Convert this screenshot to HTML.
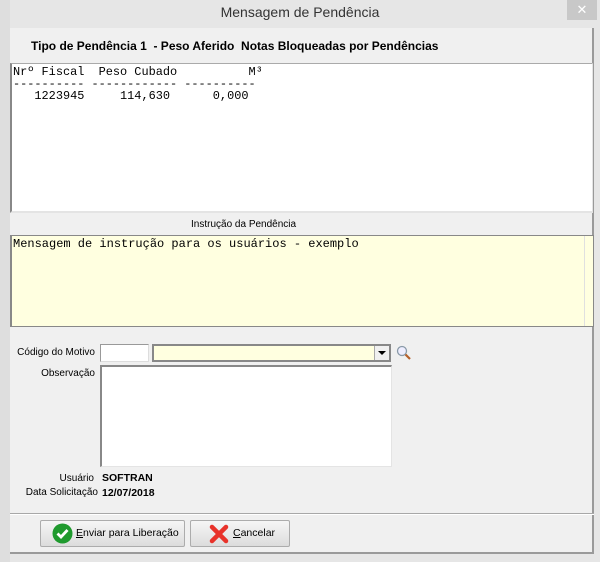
<!DOCTYPE html>
<html><head><meta charset="utf-8"><style>
*{margin:0;padding:0;box-sizing:border-box}
body{width:600px;height:562px;background:#e6e6e6;position:relative;overflow:hidden;font-family:"Liberation Sans",Arial,sans-serif;font-size:11px;color:#000}
.abs{position:absolute;white-space:nowrap}
.title{left:0;top:0;width:600px;height:26px;text-align:center;line-height:25px;font-size:14px;color:#333}
.close{left:567px;top:0;width:30px;height:20px;background:#c8c8c8;color:#fff;text-align:center;line-height:19px;font-size:13px}
.client{left:10px;top:28px;width:584px;height:526px;background:#f0f0f0;border-right:2px solid #9a9a9a;border-bottom:2px solid #9a9a9a}
.mono{font-family:"Liberation Mono","DejaVu Sans Mono",monospace;font-size:12px;white-space:pre;line-height:12px}
.btn{height:27px;border:1px solid #acacac;border-radius:2px;background:linear-gradient(#f6f6f6,#dcdcdc);font-size:11px}
.lbl{text-align:right;width:85px;font-size:10px}
</style></head><body>
<div class="abs" style="left:0;top:0;width:10px;height:562px;background:#dedede"></div>
<div class="abs title">Mensagem de Pendência</div>
<div class="abs close">✕</div>
<div class="abs client"></div>
<div class="abs" style="left:31px;top:39px;font-weight:bold;font-size:12px">Tipo de Pendência 1 &nbsp;- Peso Aferido &nbsp;Notas Bloqueadas por Pendências</div>
<div class="abs" style="left:10px;top:63px;width:583px;height:150px;background:#fff;border-left:2px solid #888;border-top:1px solid #aaa;border-bottom:2px solid #e4e4e4;border-right:1px solid #e4e4e4"></div>
<div class="abs mono" style="left:13px;top:66px;font-size:11.9px">Nrº Fiscal  Peso Cubado          M³
---------- ------------ ----------
   1223945     114,630      0,000</div>
<div class="abs" style="left:191px;top:219px;font-size:10px">Instrução da Pendência</div>
<div class="abs" style="left:10px;top:235px;width:584px;height:92px;background:#ffffe0;border:1px solid #888;border-left:2px solid #888"></div>
<div class="abs" style="left:584px;top:236px;width:1px;height:90px;background:#e0e0e0"></div>
<div class="abs mono" style="left:13px;top:238px">Mensagem de instrução para os usuários - exemplo</div>
<div class="abs lbl" style="left:10px;top:347px">Código do Motivo</div>
<div class="abs" style="left:100px;top:344px;width:49px;height:18px;background:#fff;border:1px solid #999;border-right-color:#ddd;border-bottom-color:#ddd"></div>
<div class="abs" style="left:152px;top:344px;width:239px;height:18px;background:#ffffe0;border:2px solid #888;border-right-color:#888"></div>
<div class="abs" style="left:374px;top:346px;width:15px;height:14px;background:#f0f0f0;border-left:1px solid #aaa"></div>
<div class="abs" style="left:378px;top:351px;width:0;height:0;border-left:4px solid transparent;border-right:4px solid transparent;border-top:4px solid #000"></div>
<svg class="abs" style="left:396px;top:345px" width="16" height="16"><circle cx="6" cy="6" r="4.5" fill="#eef" stroke="#8a9aa8" stroke-width="1.3"/><line x1="9.5" y1="9.5" x2="14" y2="14" stroke="#b5602a" stroke-width="2.2"/></svg>
<div class="abs lbl" style="left:10px;top:368px">Observação</div>
<div class="abs" style="left:100px;top:365px;width:292px;height:102px;background:#fff;border:1px solid #888;border-left:2px solid #888;border-top:2px solid #888;border-right-color:#e4e4e4;border-bottom-color:#e4e4e4"></div>
<div class="abs lbl" style="left:9px;top:473px">Usuário</div>
<div class="abs" style="left:102px;top:472px;font-weight:bold;font-size:10.5px">SOFTRAN</div>
<div class="abs lbl" style="left:13px;top:487px">Data Solicitação</div>
<div class="abs" style="left:102px;top:487px;font-weight:bold;font-size:10.5px">12/07/2018</div>
<div class="abs" style="left:10px;top:513px;width:584px;height:1px;background:#a8a8a8"></div>
<div class="abs" style="left:10px;top:514px;width:584px;height:1px;background:#fff"></div>
<div class="abs btn" style="left:40px;top:520px;width:145px"></div>
<svg class="abs" style="left:52px;top:523px" width="21" height="21"><circle cx="10.5" cy="10.5" r="10" fill="#1f9a2e"/><path d="M5.5 10.5 L9 14 L15.5 7" fill="none" stroke="#fff" stroke-width="2.8"/></svg>
<div class="abs" style="left:76px;top:527px;font-size:10.5px"><u>E</u>nviar para Liberação</div>
<div class="abs btn" style="left:190px;top:520px;width:100px"></div>
<svg class="abs" style="left:209px;top:524px" width="20" height="20"><path d="M3 3 L17 17 M17 3 L3 17" stroke="#e8322a" stroke-width="4.5" stroke-linecap="round"/></svg>
<div class="abs" style="left:233px;top:527px;font-size:10.5px"><u>C</u>ancelar</div>
</body></html>
